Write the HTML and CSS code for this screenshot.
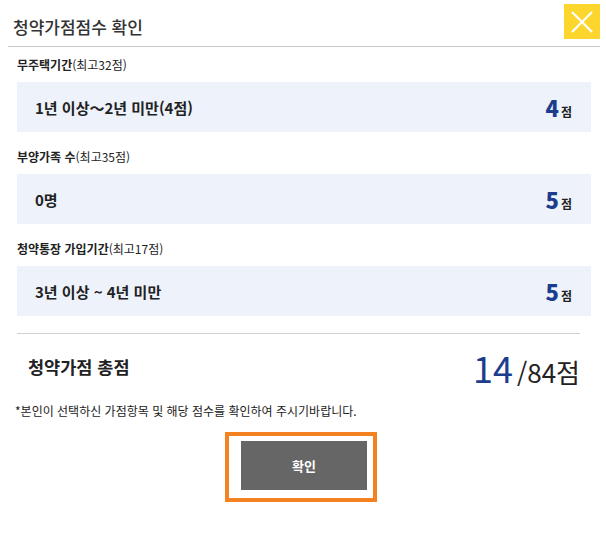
FILE: index.html
```html
<!DOCTYPE html>
<html lang="ko">
<head>
  <meta charset="UTF-8">
  <title>청약가점점수 확인</title>
  <link rel="stylesheet" href="styles.css">
</head>
<body>
  <div class="modal">
    <div class="modal-head">
      <h2>청약가점점수 확인</h2>
      <button class="close-btn" aria-label="닫기">
        <svg width="22" height="22" viewBox="0 0 22 22">
          <path d="M1 1 L21 21 M21 1 L1 21" stroke="#fff" stroke-width="2.2" fill="none"/>
        </svg>
      </button>
    </div>

    <div class="score-list">
      <div class="score-item first">
        <div class="score-label">무주택기간<span>(최고32점)</span></div>
        <div class="score-row">
          <span class="choice">1년 이상～2년 미만(4점)</span>
          <span class="point"><b>4</b>점</span>
        </div>
      </div>
      <div class="score-item">
        <div class="score-label">부양가족 수<span>(최고35점)</span></div>
        <div class="score-row">
          <span class="choice">0명</span>
          <span class="point"><b>5</b>점</span>
        </div>
      </div>
      <div class="score-item">
        <div class="score-label">청약통장 가입기간<span>(최고17점)</span></div>
        <div class="score-row">
          <span class="choice">3년 이상 ~ 4년 미만</span>
          <span class="point"><b>5</b>점</span>
        </div>
      </div>
    </div>

    <div class="total">
      <span class="total-title">청약가점 총점</span>
      <span class="total-score"><b>14</b>/84점</span>
    </div>

    <p class="note">*본인이 선택하신 가점항목 및 해당 점수를 확인하여 주시기바랍니다.</p>

    <div class="actions">
      <div class="highlight">
        <button class="confirm-btn">확인</button>
      </div>
    </div>
  </div>
</body>
</html>
```

FILE: styles.css
```css
* {
  box-sizing: border-box;
}

body {
  margin: 0;
  background: #fff;
  font-family: "Noto Sans CJK KR", "Noto Sans", sans-serif;
  color: #222;
}

.modal {
  width: 606px;
  height: 539px;
  background: #fff;
}

.modal-head {
  display: flex;
  justify-content: space-between;
  align-items: flex-start;
  height: 47px;
  margin: 0 6px 0 8px;
  border-bottom: 1px solid #c8c8c8;
}

.modal-head h2 {
  margin: 0;
  padding: 15px 0 0 5px;
  font-size: 17px;
  font-weight: 500;
  line-height: 24px;
  color: #333;
}

.close-btn {
  display: flex;
  align-items: center;
  justify-content: center;
  width: 36px;
  height: 35px;
  margin-top: 4px;
  padding: 0;
  border: none;
  background: #fcd62c;
  cursor: pointer;
}

.score-list {
  margin: 0 15px 0 17px;
}

.score-label {
  padding: 16px 0 9px;
  font-size: 12px;
  font-weight: 700;
  line-height: 17px;
  color: #222;
}

.score-item.first .score-label {
  padding: 9px 0 9px;
}

.score-label span {
  font-weight: 400;
}

.score-row {
  display: flex;
  justify-content: space-between;
  align-items: center;
  height: 50px;
  padding: 0 19px 0 18px;
  background: #edf2fb;
}

.choice {
  font-size: 15px;
  font-weight: 700;
  color: #222;
}

.point {
  font-size: 12px;
  font-weight: 700;
  color: #222;
}

.point b {
  margin-right: 2px;
  font-size: 22px;
  color: #1c3d8e;
}

.total {
  display: flex;
  justify-content: space-between;
  align-items: center;
  height: 66px;
  margin: 17px 26px 0 17px;
  padding-left: 11px;
  border-top: 1px solid #d0d0d0;
}

.total-title {
  font-size: 17.5px;
  font-weight: 700;
  color: #222;
}

.total-score {
  font-size: 26px;
  font-weight: 400;
  color: #222;
}

.total-score b {
  margin-right: 4px;
  font-size: 36px;
  font-weight: 400;
  color: #1c3d8e;
}

.note {
  margin: 4px 0 0 15px;
  font-size: 12px;
  line-height: 16px;
  color: #222;
}

.actions {
  display: flex;
  justify-content: center;
  margin-top: 13px;
}

.highlight {
  margin-left: -4px;
  padding: 5px 6px 8px 12px;
  border: 4px solid #f58220;
}

.confirm-btn {
  display: block;
  width: 126px;
  height: 49px;
  border: none;
  background: #666;
  color: #fff;
  font-family: inherit;
  font-size: 13px;
  font-weight: 700;
  cursor: pointer;
}
```
